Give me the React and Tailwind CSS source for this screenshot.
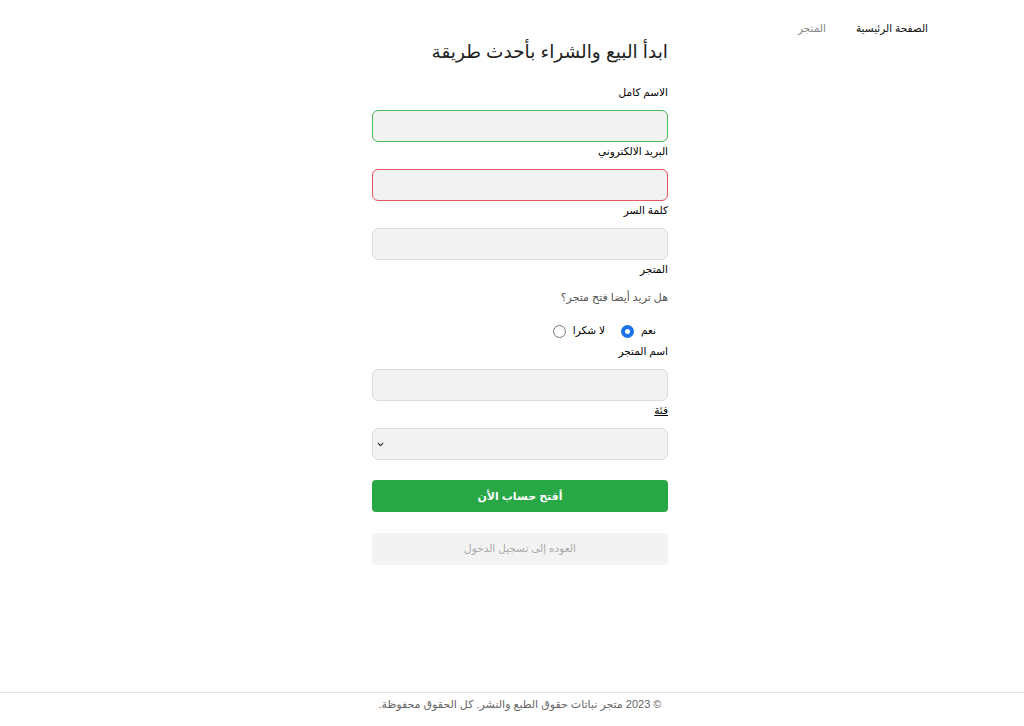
import { ChevronDown } from "lucide-react";

const FONT = "font-['Liberation_Sans','DejaVu_Sans',sans-serif]";

const Label = ({ children, className = "" }) => (
  <label
    className={`block h-[14px] text-[10.5px] leading-[14px] text-black ${className}`}
  >
    {children}
  </label>
);

const Field = ({ label, border = "border-[#dcdcdc]", first }) => (
  <>
    <Label className={`mb-[11px] ${first ? "" : "mt-[2px]"}`}>{label}</Label>
    <input
      type="text"
      className={`block w-full h-[32px] rounded-md border bg-[#f2f2f2] px-3 outline-none ${border}`}
    />
  </>
);

export default function App() {
  return (
    <div dir="rtl" className={`min-h-screen flex flex-col bg-white ${FONT}`}>
      <nav className="flex items-center gap-[30px] pr-[96px] pt-[20px] h-[36px] text-[10.5px] leading-[16px]">
        <a className="text-[#111]">الصفحة الرئيسية</a>
        <a className="text-[#888]">المتجر</a>
      </nav>

      <main className="flex-1 flex justify-center pl-[16px]">
        <form className="w-[296px]">
          <h1 className="text-[18.5px] leading-[24px] text-[#222] mt-[4px] mb-[21px]">
            ابدأ البيع والشراء بأحدث طريقة
          </h1>

          <Field label="الاسم كامل" border="border-[#4cbb5c]" first />
          <Field label="البريد الالكتروني" border="border-[#e2545e]" />
          <Field label="كلمة السر" />

          <Label className="mt-[2px]">المتجر</Label>
          <p className="mt-[13px] h-[16px] text-[11px] leading-[16px] text-[#555]">
            هل تريد أيضا فتح متجر؟
          </p>
          <div className="mt-[18px] flex items-center gap-[16px] pr-[12px] h-[16px] text-[10.5px]">
            <label className="flex items-center gap-[7px]">
              <span>نعم</span>
              <span className="w-[13px] h-[13px] rounded-full bg-[#1a73e8] flex items-center justify-center">
                <span className="w-[5px] h-[5px] rounded-full bg-white" />
              </span>
            </label>
            <label className="flex items-center gap-[7px]">
              <span>لا شكرا</span>
              <span className="w-[13px] h-[13px] rounded-full border border-[#777] bg-white" />
            </label>
          </div>

          <Label className="mt-[5px] mb-[11px]">اسم المتجر</Label>
          <input
            type="text"
            className="block w-full h-[32px] rounded-md border border-[#dcdcdc] bg-[#f2f2f2] px-3 outline-none"
          />
          <Label className="mt-[2px] mb-[11px] underline">فئة</Label>
          <div className="relative h-[32px] w-full rounded-md border border-[#dcdcdc] bg-[#f2f2f2]">
            <ChevronDown
              className="absolute left-[3px] top-[11px] w-[9px] h-[9px] text-[#333]"
              strokeWidth={3.5}
            />
          </div>

          <button
            type="button"
            className="mt-[20px] block w-full h-[32px] rounded-[4px] bg-[#28a745] text-white text-[11px] font-bold"
          >
            أفتح حساب الأن
          </button>
          <button
            type="button"
            className="mt-[21px] block w-full h-[32px] rounded-[4px] bg-[#f3f3f3] text-[#aaa] text-[10.5px]"
          >
            العوده إلى تسجيل الدخول
          </button>
        </form>
      </main>

      <footer className="border-t border-[#e5e5e5] h-[34px] pt-[1px] pl-[16px] text-center text-[11px] leading-[20px] text-[#666]">
        © 2023 متجر نباتات حقوق الطبع والنشر. كل الحقوق محفوظة.
      </footer>
    </div>
  );
}
